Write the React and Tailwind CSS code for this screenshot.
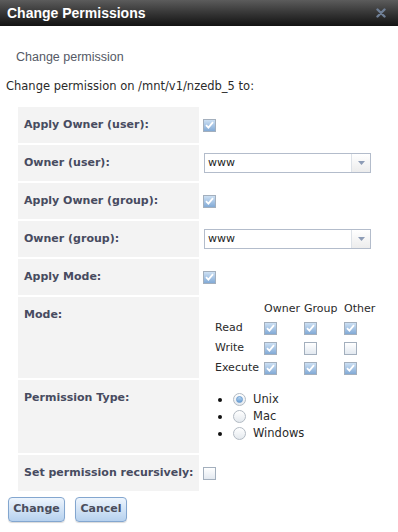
import React from 'react';

const verdana = "font-['DejaVu_Sans',Verdana,sans-serif]";

function Check({ checked = false }) {
  return (
    <span
      className={`inline-flex items-center justify-center w-[13px] h-[13px] border border-[#a3afbd] ${
        checked ? 'bg-gradient-to-b from-[#cde0f3] to-[#82aad6]' : 'bg-gradient-to-b from-[#ffffff] to-[#e3e9f0]'
      }`}
    >
      {checked && (
        <svg width="9" height="8" viewBox="0 0 9 8">
          <path d="M1 4.2 L3.4 6.6 L8 1.2" fill="none" stroke="#ffffff" strokeWidth="1.8" />
        </svg>
      )}
    </span>
  );
}

function Radio({ checked = false }) {
  return (
    <span className="inline-flex items-center justify-center w-[13px] h-[13px] rounded-full border border-[#b2bac3] bg-gradient-to-b from-[#ffffff] to-[#e4e9ee]">
      {checked && <span className="w-[7px] h-[7px] rounded-full border border-[#6b9cd0] bg-gradient-to-b from-[#b9d6f0] to-[#6a9fd3]" />}
    </span>
  );
}

function Select({ value }) {
  return (
    <div className="ml-[1px] flex h-[20px] w-[167px] border border-[#b3bccb] bg-white">
      <span className="flex-1 pl-[3px] text-[11px] leading-[18px] text-[#222]">{value}</span>
      <span className="flex w-[19px] items-center justify-center border-l border-[#dde2e8] bg-gradient-to-b from-[#ffffff] to-[#ececec]">
        <svg width="7" height="4" viewBox="0 0 7 4">
          <path d="M0 0 H7 L3.5 4 Z" fill="#8d9cb6" />
        </svg>
      </span>
    </div>
  );
}

function Row({ label, children, valueClass = 'flex items-center pl-[2px]' }) {
  return (
    <>
      <div className="bg-[#f3f3f3] pl-[6px] py-[11px] text-[11px] leading-[14px] font-bold text-[#474b60]">{label}</div>
      <div className={valueClass}>{children}</div>
    </>
  );
}

export default function App() {
  const modes = [
    ['Read', true, true, true],
    ['Write', true, false, false],
    ['Execute', true, true, true],
  ];

  return (
    <div className={`w-[398px] h-[532px] bg-white ${verdana} text-[#2a2a2a]`}>
      {/* Title bar */}
      <div className="flex h-[26px] items-center justify-between bg-gradient-to-b from-[#5c5c5c] to-[#141414] pl-[7px] pr-[12px]">
        <span className="font-['Liberation_Sans',Arial,sans-serif] text-[14px] font-bold text-white">Change Permissions</span>
        <svg width="10" height="10" viewBox="0 0 10 10">
          <path d="M1.5 1.5 L8.5 8.5 M8.5 1.5 L1.5 8.5" stroke="#6f7f96" strokeWidth="2.4" strokeLinecap="round" />
        </svg>
      </div>

      <div className="pl-[16px] pt-[24px] font-['Liberation_Sans',Arial,sans-serif] text-[12.5px] leading-[15px] text-[#555a66]">
        Change permission
      </div>
      <div className="mt-[15px] pl-[6px] text-[11.5px] leading-[13px]">Change permission on /mnt/v1/nzedb_5 to:</div>

      {/* Form table */}
      <div className="ml-[18px] mt-[14px] grid w-[362px] grid-cols-[181px_1fr] gap-x-[2px] gap-y-[2px]">
        <Row label="Apply Owner (user):">
          <Check checked />
        </Row>
        <Row label="Owner (user):">
          <Select value="www" />
        </Row>
        <Row label="Apply Owner (group):">
          <Check checked />
        </Row>
        <Row label="Owner (group):">
          <Select value="www" />
        </Row>
        <Row label="Apply Mode:">
          <Check checked />
        </Row>
        <Row label="Mode:" valueClass="pl-[14px] pt-[3px]">
          <div className="grid grid-cols-[49px_40px_40px_40px] text-[11px]">
            <span className="h-[18px]" />
            <span className="h-[18px] leading-[18px]">Owner</span>
            <span className="h-[18px] leading-[18px]">Group</span>
            <span className="h-[18px] leading-[18px]">Other</span>
            {modes.map(([name, a, b, c]) => (
              <React.Fragment key={name}>
                <span className="h-[20px] leading-[20px]">{name}</span>
                <span className="flex h-[20px] items-center"><Check checked={a} /></span>
                <span className="flex h-[20px] items-center"><Check checked={b} /></span>
                <span className="flex h-[20px] items-center"><Check checked={c} /></span>
              </React.Fragment>
            ))}
          </div>
        </Row>
        <Row label="Permission Type:" valueClass="py-[11px]">
          {['Unix', 'Mac', 'Windows'].map((t, i) => (
            <div key={t} className="flex h-[17px] items-center text-[11.5px]">
              <span className="ml-[17px] mr-[11px] h-[4px] w-[4px] rounded-full bg-[#111]" />
              <Radio checked={i === 0} />
              <span className="ml-[7px]">{t}</span>
            </div>
          ))}
        </Row>
        <Row label="Set permission recursively:">
          <Check />
        </Row>
      </div>

      {/* Buttons */}
      <div className="mt-[6px] flex gap-[10px] pl-[8px]">
        <button className="h-[25px] w-[57px] rounded-[4px] border border-[#83a6cf] bg-gradient-to-b from-[#eef5fd] to-[#b6d1ee] text-[11px] font-bold text-[#4a4d5c] shadow-[0_1px_1px_rgba(0,0,0,0.15)]">
          Change
        </button>
        <button className="h-[25px] w-[52px] rounded-[4px] border border-[#83a6cf] bg-gradient-to-b from-[#eef5fd] to-[#b6d1ee] text-[11px] font-bold text-[#4a4d5c] shadow-[0_1px_1px_rgba(0,0,0,0.15)]">
          Cancel
        </button>
      </div>
    </div>
  );
}
